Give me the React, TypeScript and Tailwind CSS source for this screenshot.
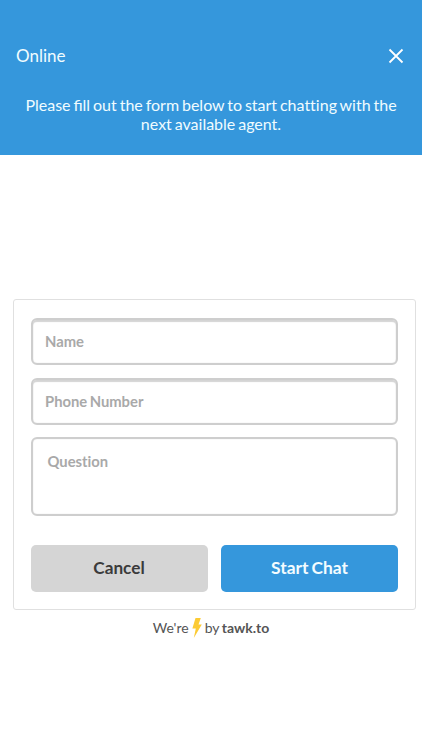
export default function App() {
  const field =
    "block w-full rounded-[6px] border-2 border-[#cecece] bg-white font-bold text-[#555] placeholder:text-[#a9a9a9] placeholder:opacity-100 outline-none";
  return (
    <div className="flex h-[750px] w-[422px] flex-col overflow-hidden bg-white font-['Lato',sans-serif] [font-variant-ligatures:none]">
      <header className="h-[155px] shrink-0 bg-[#3597dc] text-[#f0fcff]">
        <div className="flex items-center justify-between pt-[44px] pr-[18px] pl-4">
          <h1 className="text-[17px] leading-6">Online</h1>
          <button aria-label="Close" className="size-4">
            <svg viewBox="0 0 16 16" className="size-4" fill="none" stroke="#fff" strokeWidth="1.8">
              <path d="M1.5 1.5 14.5 14.5M14.5 1.5 1.5 14.5" />
            </svg>
          </button>
        </div>
        <p className="mt-[27px] text-center text-[16px] leading-[19px] [word-spacing:-1.2px]">
          Please <span className="[font-variant-ligatures:normal]">fill</span> out the form below to start chatting with the
          <br />
          next available agent.
        </p>
      </header>

      <form className="mt-[144px] mr-[6px] ml-[13px] h-[311px] shrink-0 rounded-[3px] border border-[#e0e0e0] px-[17px] pt-[18px]">
        <input
          placeholder="Name"
          className={`${field} h-[47px] px-3 pb-[2px] text-[14.8px] [word-spacing:-1.2px] shadow-[inset_0_2px_1px_#d4d4d4,inset_0_0_1px_#cecece]`}
        />
        <input
          placeholder="Phone Number"
          className={`${field} mt-[13px] h-[47px] px-3 pb-[2px] text-[14.8px] [word-spacing:-1.2px] shadow-[inset_0_2px_1px_#d4d4d4,inset_0_0_1px_#cecece]`}
        />
        <textarea
          placeholder="Question"
          className={`${field} mt-3 h-[79px] resize-none px-[14.5px] pt-[13px] text-[14.8px] leading-[18px] shadow-[inset_0_0_1px_#cecece]`}
        />
        <div className="mt-[29px] grid grid-cols-2 gap-[13px]">
          <button type="button" className="h-[47px] rounded-[5px] bg-[#d5d5d5] pr-px pb-px text-[17.2px] font-bold text-[#3b3b3b]">
            Cancel
          </button>
          <button type="button" className="h-[47px] rounded-[5px] bg-[#3597dc] pb-px text-[17.4px] font-bold text-[#f3fcff] [word-spacing:-1.2px]">
            Start Chat
          </button>
        </div>
      </form>

      <footer className="mt-[7px] flex h-[22px] items-center justify-center text-[14px] text-[#555] [word-spacing:-1px]">
        <span className="-mt-[2px]">We're</span>
        <svg viewBox="0 0 10 20" className="mx-[3px] h-5 w-[10px]" fill="#fccb35">
          <path d="M3.5 0H8.8L6.5 6.6H9.8L1.8 20 3.8 10.5H.4Z" />
        </svg>
        <span className="-mt-[2px]">
          by <b>tawk.to</b>
        </span>
      </footer>
    </div>
  );
}
